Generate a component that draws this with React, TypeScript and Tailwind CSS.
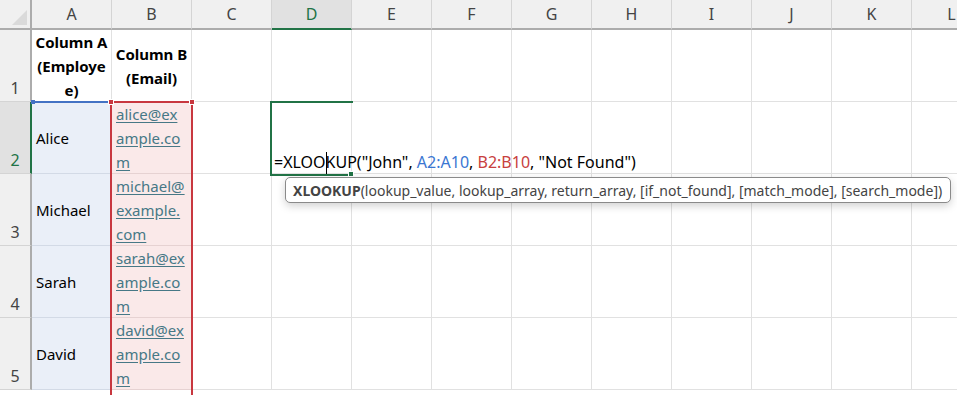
const COLS = ['A', 'B', 'C', 'D', 'E', 'F', 'G', 'H', 'I', 'J', 'K', 'L'];

const ROWS = [
  { n: 1, a: null, b: null },
  { n: 2, a: 'Alice', b: ['alice@ex', 'ample.co', 'm'] },
  { n: 3, a: 'Michael', b: ['michael@', 'example.', 'com'] },
  { n: 4, a: 'Sarah', b: ['sarah@ex', 'ample.co', 'm'] },
  { n: 5, a: 'David', b: ['david@ex', 'ample.co', 'm'] },
];

function ColHeader({ label }: { label: string }) {
  const active = label === 'D';
  return (
    <div
      className={
        active
          ? 'flex items-center justify-center border-r border-[#d4d4d4] border-b-2 border-b-[#217346] bg-[#e1e1e1] text-[16px] text-[#217346]'
          : 'flex items-center justify-center border-r border-[#d4d4d4] border-b-2 border-b-[#acacac] bg-[#f0f0f0] text-[16px] text-[#444]'
      }
    >
      {label}
    </div>
  );
}

function RowHeader({ n }: { n: number }) {
  const active = n === 2;
  return (
    <div
      className={
        active
          ? 'flex items-end justify-center pb-[1px] border-r-2 border-r-[#217346] border-b border-b-[#d4d4d4] bg-[#e1e1e1] text-[16px] leading-[24px] text-[#217346]'
          : 'flex items-end justify-center pb-[1px] border-r-2 border-r-[#acacac] border-b border-b-[#d4d4d4] bg-[#f0f0f0] text-[16px] leading-[24px] text-[#444]'
      }
    >
      {n}
    </div>
  );
}

function Cell({ children, tint, center }: { children?: React.ReactNode; tint?: 'blue' | 'red'; center?: boolean }) {
  const bg = tint === 'blue' ? 'bg-[#eaeff8]' : tint === 'red' ? 'bg-[#fae9e9]' : 'bg-white';
  const line = tint === 'blue' ? 'border-[#d3dae6]' : tint === 'red' ? 'border-[#e6d2d2]' : 'border-[#e1e1e1]';
  return (
    <div
      className={`flex flex-col justify-center overflow-hidden whitespace-nowrap border-r border-b px-[4px] text-[15px] leading-[24px] text-black ${bg} ${line} ${center ? 'items-center text-center' : 'items-start'}`}
    >
      {children}
    </div>
  );
}

export default function App() {
  return (
    <div className="relative h-[395px] w-[957px] overflow-hidden bg-white font-['Noto_Sans',sans-serif]">
      <div className="grid grid-cols-[32px_repeat(12,80px)] grid-rows-[30px_repeat(5,72px)]">
        {/* corner */}
        <div className="flex items-end justify-end p-[3px] border-r-2 border-r-[#acacac] border-b-2 border-b-[#acacac] bg-[#f0f0f0]">
          <svg width="15" height="15" viewBox="0 0 15 15">
            <polygon points="15,0 15,15 0,15" fill="#dadada" />
          </svg>
        </div>
        {COLS.map((c) => (
          <ColHeader key={c} label={c} />
        ))}

        {ROWS.map((r) => (
          <div key={r.n} className="contents">
            <RowHeader n={r.n} />
            {r.n === 1 ? (
              <>
                <Cell center>
                  <span className="font-bold">Column A</span>
                  <span className="font-bold">(Employe</span>
                  <span className="font-bold">e)</span>
                </Cell>
                <Cell center>
                  <span className="font-bold">Column B</span>
                  <span className="font-bold">(Email)</span>
                </Cell>
              </>
            ) : (
              <>
                <Cell tint="blue">{r.a}</Cell>
                <Cell tint="red">
                  {r.b?.map((l) => (
                    <span key={l} className="text-[#467886] underline underline-offset-2">
                      {l}
                    </span>
                  ))}
                </Cell>
              </>
            )}
            {COLS.slice(2).map((c) => (
              <Cell key={c} />
            ))}
          </div>
        ))}
      </div>

      {/* A2:A10 reference highlight */}
      <div className="absolute left-[32px] top-[101px] h-[2px] w-[79px] bg-[#4472c4]" />
      <div className="absolute left-[31px] top-[100px] h-[4px] w-[4px] bg-[#4472c4]" />

      {/* B2:B10 reference highlight */}
      <div className="absolute left-[110px] top-[101px] h-[300px] w-[83px] border-x-2 border-t-2 border-[#c8373f]" />
      <div className="absolute left-[108px] top-[99px] h-[6px] w-[6px] border border-white bg-[#c8373f]" />
      <div className="absolute left-[189px] top-[99px] h-[6px] w-[6px] border border-white bg-[#c8373f]" />

      {/* active cell D2 in edit mode */}
      <div className="absolute left-[270px] top-[101px] h-[75px] w-[83px] border-y-2 border-l-2 border-[#217346]" />
      <div className="absolute left-[348px] top-[171px] h-[6px] w-[6px] border border-white bg-[#217346]" />

      {/* formula text */}
      <div className="absolute left-[274px] top-[150px] whitespace-nowrap text-[16px] leading-[24px] text-black">
        =XLOO
        <span className="relative">
          <span className="absolute left-0 top-[1px] h-[22px] w-px bg-black" />
        </span>
        KUP("John", <span className="text-[#3a76d2]">A2:A10</span>, <span className="text-[#c8403e]">B2:B10</span>, "Not Found")
      </div>

      {/* function tooltip */}
      <div className="absolute left-[285px] top-[177px] flex h-[26px] w-[666px] items-center rounded-[5px] border border-[#8a8a8a] bg-white pl-[7px] text-[14px] text-[#444] whitespace-nowrap shadow-[0_3px_8px_rgba(0,0,0,0.18)]">
        <span className="font-bold">XLOOKUP</span>
        <span>(lookup_value, lookup_array, return_array, [if_not_found], [match_mode], [search_mode])</span>
      </div>
    </div>
  );
}
